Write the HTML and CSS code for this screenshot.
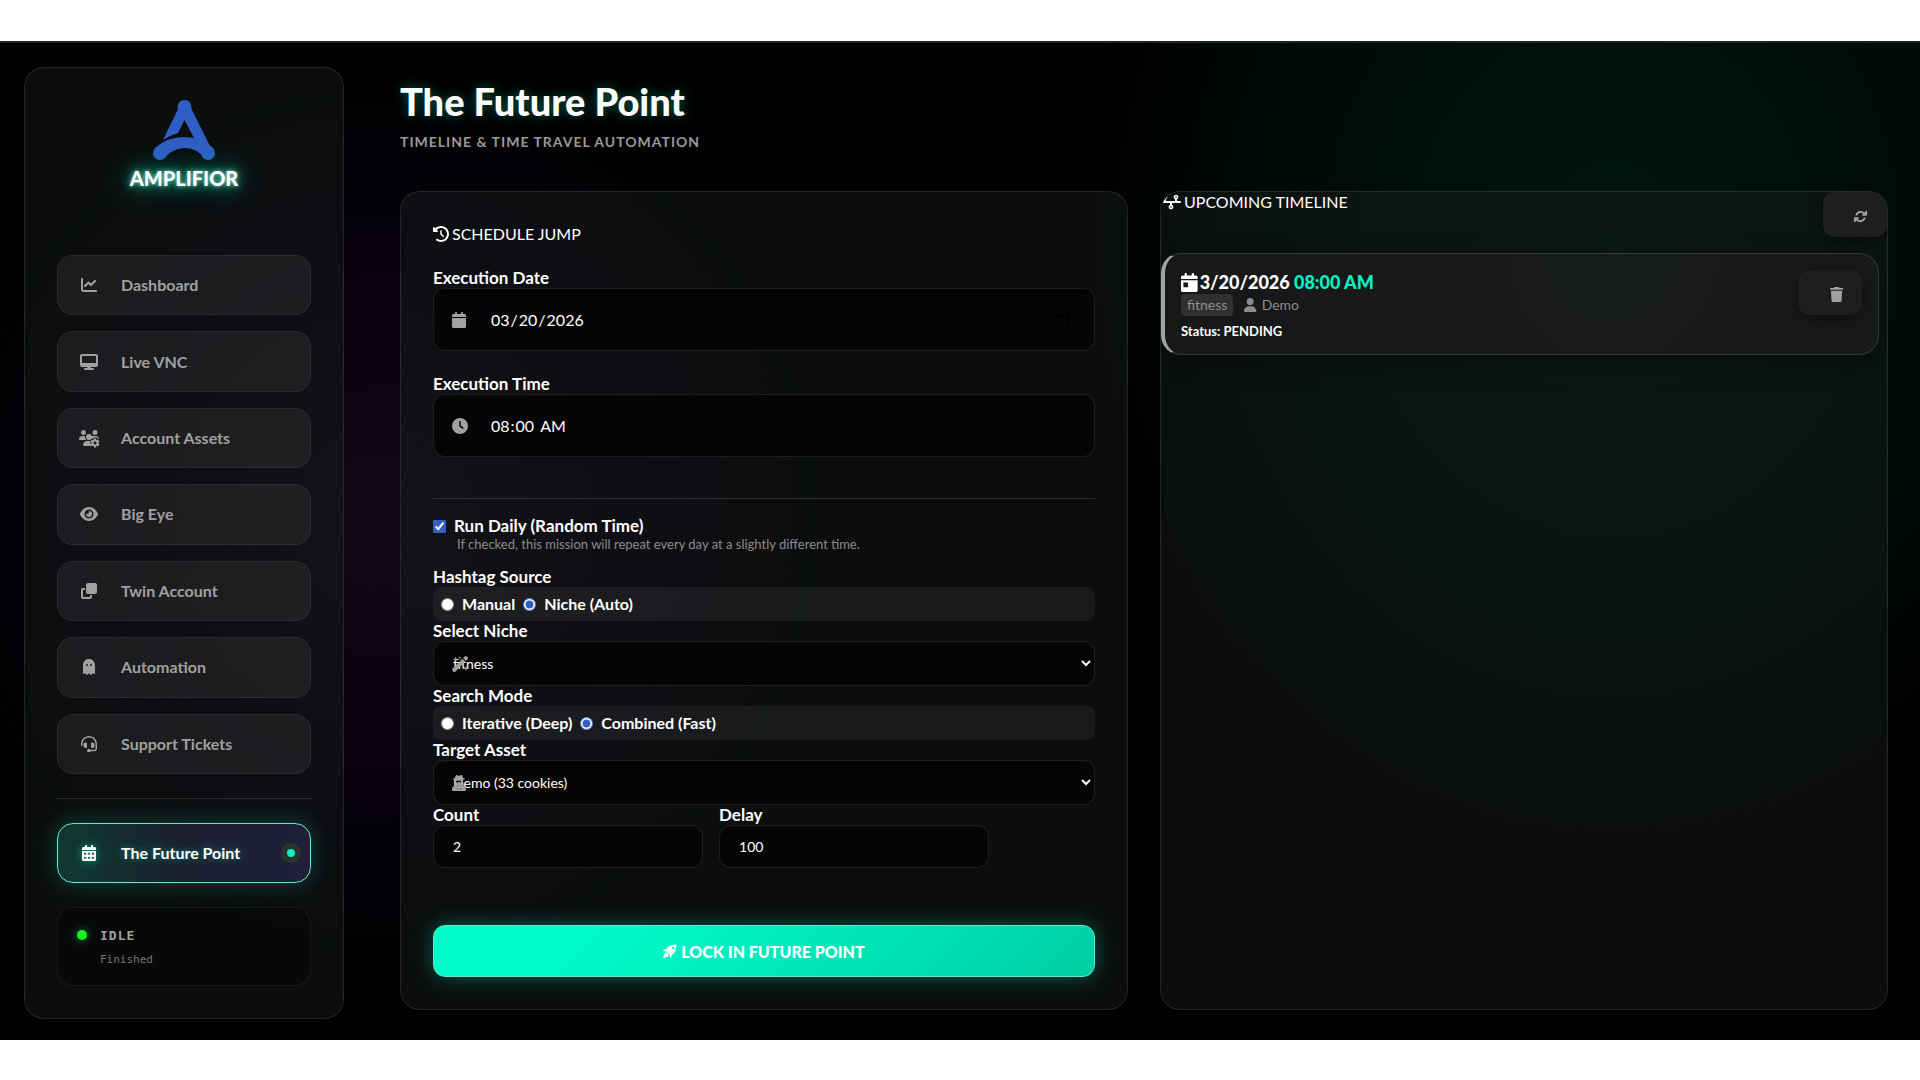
FILE: index.html
```html
<!DOCTYPE html>
<html lang="en">
<head>
<meta charset="utf-8">
<meta name="viewport" content="width=device-width, initial-scale=1">
<title>Amplifior – The Future Point</title>
<link rel="stylesheet" href="styles.css">
</head>
<body>
<div class="app">
  <aside class="sidebar">
    <div class="brand">
      <svg class="brand-mark" viewBox="0 0 62 60" aria-hidden="true">
        <g fill="#2f5fc4">
          <circle cx="31.500" cy="7" r="7"/><circle cx="7" cy="53" r="7"/><circle cx="55" cy="53" r="7"/>
          <path d="M25 9 38 8 57 46 50 56 45 50 41 38 31.500 20 25 33Q18 35 10 40Z"/>
          <path d="M2 48Q14 37 31 37T60 48L52 58Q42 47 31 48T12 57Z"/>
        </g>
      </svg>
      <span class="brand-name">AMPLIFIOR</span>
    </div>
    <nav class="nav" aria-label="Main">
      <a class="nav-item" href="#"><span class="nav-icon"><svg class="icon" viewBox="0 0 512 512"><path d="M64 64c0-17.700-14.300-32-32-32S0 46.300 0 64V400c0 44.200 35.800 80 80 80H480c17.700 0 32-14.300 32-32s-14.300-32-32-32H80c-8.800 0-16-7.200-16-16V64zm406.600 86.600c12.500-12.500 12.500-32.800 0-45.300s-32.800-12.500-45.300 0L320 210.700l-57.400-57.400c-12.500-12.500-32.800-12.500-45.300 0l-112 112c-12.500 12.500-12.500 32.800 0 45.300s32.800 12.500 45.300 0L240 221.300l57.400 57.400c12.500 12.500 32.800 12.500 45.300 0l128-128z"/></svg></span>Dashboard</a>
      <a class="nav-item" href="#"><span class="nav-icon"><svg class="icon" viewBox="0 0 576 512"><path d="M64 0C28.700 0 0 28.700 0 64V352c0 35.300 28.700 64 64 64H240l-10.700 32H160c-17.700 0-32 14.300-32 32s14.300 32 32 32H416c17.700 0 32-14.300 32-32s-14.300-32-32-32H346.700L336 416H512c35.300 0 64-28.700 64-64V64c0-35.300-28.700-64-64-64H64zM512 64V288H64V64H512z"/></svg></span>Live VNC</a>
      <a class="nav-item" href="#"><span class="nav-icon"><svg class="icon" viewBox="0 0 640 512"><circle cx="144" cy="80" r="80"/><circle cx="512" cy="80" r="80"/><circle cx="320" cy="220" r="96"/><path d="M0 299c0-59 48-107 107-107h42c16 0 31 3 45 10-8 40 3 84 38 118H21c-12 0-21-9-21-21zM406 202c14-7 29-10 44-10h83c59 0 107 48 107 107-12-12-24-18-40-22l-30-34h-84l-30 34-40 20c-14-20-14-70-10-95zM128 485c0-74 60-133 133-133h100c-8 40-4 80 38 110l-6 50H155c-15 0-27-12-27-27z"/><path fill-rule="evenodd" d="M478 270h68l8 42 28 16 40-14 34 59-32 27v32l32 27-34 59-40-14-28 16-8 42h-68l-8-42-28-16-40 14-34-59 32-27v-32l-32-27 34-59 40 14 28-16zM512 370a46 46 0 1 0 0 92 46 46 0 1 0 0-92z"/></svg></span>Account Assets</a>
      <a class="nav-item" href="#"><span class="nav-icon"><svg class="icon" viewBox="0 0 576 512"><path d="M288 32c-80.800 0-145.500 36.800-192.600 80.600C48.600 156 17.300 208 2.500 243.700c-3.300 7.900-3.300 16.700 0 24.600C17.300 304 48.600 356 95.400 399.400C142.500 443.200 207.200 480 288 480s145.500-36.800 192.600-80.600c46.800-43.500 78.100-95.400 93-131.100c3.300-7.900 3.300-16.700 0-24.600c-14.900-35.700-46.200-87.700-93-131.100C433.500 68.800 368.800 32 288 32zM144 256a144 144 0 1 1 288 0 144 144 0 1 1 -288 0zm144-64c0 35.300-28.700 64-64 64c-7.100 0-13.900-1.200-20.300-3.300c-5.500-1.800-11.900 1.600-11.700 7.400c.3 6.900 1.300 13.800 3.200 20.700c13.700 51.200 66.400 81.600 117.600 67.900s81.600-66.400 67.900-117.600c-11.100-41.500-47.800-69.400-88.600-71.100c-5.800-.2-9.200 6.100-7.400 11.700c2.100 6.400 3.300 13.200 3.300 20.300z"/></svg></span>Big Eye</a>
      <a class="nav-item" href="#"><span class="nav-icon"><svg class="icon" viewBox="0 0 512 512"><path d="M288 448H64V224h64V160H64c-35.300 0-64 28.700-64 64V448c0 35.300 28.700 64 64 64H288c35.300 0 64-28.700 64-64V384H288v64zm-64-96H448c35.300 0 64-28.700 64-64V64c0-35.300-28.700-64-64-64H224c-35.300 0-64 28.700-64 64V288c0 35.300 28.700 64 64 64z"/></svg></span>Twin Account</a>
      <a class="nav-item" href="#"><span class="nav-icon"><svg class="icon" viewBox="0 0 384 512"><path d="M40.100 467.100l-11.200 9c-3.200 2.500-7.100 3.900-11.100 3.900C8 480 0 472 0 462.200V192C0 86 86 0 192 0S384 86 384 192V462.200c0 9.800-8 17.800-17.800 17.800c-4 0-7.900-1.400-11.100-3.900l-11.200-9c-13.400-10.700-32.800-9-44.100 3.900L269.300 506c-3.300 3.800-8.200 6-13.300 6s-9.900-2.200-13.300-6l-26.600-30.500c-12.700-14.600-35.400-14.600-48.200 0L141.300 506c-3.300 3.800-8.200 6-13.300 6s-9.900-2.200-13.300-6L84.200 471c-11.300-12.900-30.700-14.600-44.100-3.900zM160 192a32 32 0 1 0 -64 0 32 32 0 1 0 64 0zm96 32a32 32 0 1 0 0-64 32 32 0 1 0 0 64z"/></svg></span>Automation</a>
      <a class="nav-item" href="#"><span class="nav-icon"><svg class="icon" viewBox="0 0 512 512"><path d="M256 48C141.100 48 48 141.100 48 256v40c0 13.300-10.700 24-24 24s-24-10.700-24-24V256C0 114.600 114.600 0 256 0S512 114.600 512 256V400.100c0 48.600-39.400 88-88.100 88L313.600 488c-8.300 14.300-23.800 24-41.600 24H240c-26.500 0-48-21.500-48-48s21.500-48 48-48h32c17.800 0 33.300 9.700 41.600 24l110.400 .1c22.100 0 40-17.900 40-40V256c0-114.900-93.100-208-208-208zM144 208h16c17.700 0 32 14.300 32 32V352c0 17.700-14.300 32-32 32H144c-35.300 0-64-28.700-64-64V272c0-35.300 28.700-64 64-64zm224 0c35.300 0 64 28.700 64 64v48c0 35.300-28.700 64-64 64H352c-17.700 0-32-14.300-32-32V240c0-17.700 14.300-32 32-32h16z"/></svg></span>Support Tickets</a>
    </nav>
    <div class="nav-extra">
      <a class="nav-item active" href="#" aria-current="page"><span class="nav-icon"><svg class="icon" viewBox="0 0 448 512"><path fill-rule="evenodd" d="M96 32V64H48C21.500 64 0 85.500 0 112v48H448V112c0-26.500-21.500-48-48-48H352V32c0-42-64-42-64 0V64H160V32c0-42-64-42-64 0zM448 192H0V464c0 26.500 21.500 48 48 48H400c26.500 0 48-21.500 48-48V192zM64 250h70v58H64zM189 250h70v58h-70zM314 250h70v58h-70zM64 380h70v58H64zM189 380h70v58h-70zM314 380h70v58h-70z"/></svg></span>The Future Point<span class="active-dot"></span></a>
    </div>
    <div class="status">
      <span class="status-dot"></span>
      <div>
        <div class="status-state">IDLE</div>
        <div class="status-detail">Finished</div>
      </div>
    </div>
  </aside>

  <main class="main">
    <header class="page-head">
      <h1>The Future Point</h1>
      <p>TIMELINE &amp; TIME TRAVEL AUTOMATION</p>
    </header>
    <div class="columns">
      <section class="card form-card">
        <h2 class="card-title"><svg class="icon" viewBox="0 0 512 512"><path d="M75 75L41 41C25.900 25.900 0 36.600 0 57.900V168c0 13.300 10.700 24 24 24H134.100c21.400 0 32.100-25.900 17-41l-30.800-30.800C155 85.500 203 64 256 64c106 0 192 86 192 192s-86 192-192 192c-40.800 0-78.600-12.700-109.700-34.400c-14.500-10.100-34.400-6.600-44.600 7.900s-6.600 34.400 7.900 44.600C151.200 495 201.700 512 256 512c141.400 0 256-114.600 256-256S397.400 0 256 0C185.300 0 121.300 28.700 75 75zm181 53c-13.300 0-24 10.700-24 24V256c0 6.400 2.500 12.500 7 17l72 72c9.400 9.400 24.600 9.400 33.900 0s9.400-24.600 0-33.900l-65-65V152c0-13.300-10.700-24-24-24z"/></svg>SCHEDULE JUMP</h2>
        <form class="form">
          <div class="group spaced">
            <label class="label" for="date">Execution Date</label>
            <div class="field">
              <svg class="icon field-icon" viewBox="0 0 448 512"><path d="M96 32V64H48C21.500 64 0 85.500 0 112v48H448V112c0-26.500-21.500-48-48-48H352V32c0-17.700-14.300-32-32-32s-32 14.300-32 32V64H160V32c0-17.700-14.300-32-32-32S96 14.300 96 32zM448 192H0V464c0 26.500 21.500 48 48 48H400c26.500 0 48-21.500 48-48V192z"/></svg>
              <input class="control tall" id="date" type="date" value="2026-03-20">
            </div>
          </div>
          <div class="group">
            <label class="label" for="time">Execution Time</label>
            <div class="field">
              <svg class="icon field-icon" viewBox="0 0 512 512"><path d="M256 0a256 256 0 1 1 0 512A256 256 0 1 1 256 0zM232 120V256c0 8 4 15.500 10.700 20l96 64c11 7.400 25.900 4.400 33.300-6.700s4.400-25.900-6.700-33.300L280 243.200V120c0-13.300-10.700-24-24-24s-24 10.700-24 24z"/></svg>
              <input class="control tall" id="time" type="time" value="08:00">
            </div>
          </div>
          <div class="daily">
            <label class="check"><input type="checkbox" checked>Run Daily (Random Time)</label>
            <p class="hint">If checked, this mission will repeat every day at a slightly different time.</p>
          </div>
          <fieldset class="group">
            <legend class="label">Hashtag Source</legend>
            <div class="radios">
              <label><input type="radio" name="source">Manual</label>
              <label><input type="radio" name="source" checked>Niche (Auto)</label>
            </div>
          </fieldset>
          <div class="group">
            <label class="label" for="niche">Select Niche</label>
            <div class="field">
              <svg class="icon field-icon" viewBox="0 0 576 512"><path d="M20 400 330 90l92 92-310 310c-22 22-56 22-78 0l-14-14c-22-22-22-56 0-78zM355 66l48-48c22-22 56-22 78 0l14 14c22 22 22 56 0 78l-48 48zM112 20l22 62 62 22-62 22-22 62-22-62-62-22 62-22zM250 0l14 40 40 14-40 14-14 40-14-40-40-14 40-14zM450 300l24 66 66 24-66 24-24 66-24-66-66-24 66-24z"/></svg>
              <select class="control" id="niche"><option>fitness</option></select>
            </div>
          </div>
          <fieldset class="group">
            <legend class="label">Search Mode</legend>
            <div class="radios">
              <label><input type="radio" name="mode">Iterative (Deep)</label>
              <label><input type="radio" name="mode" checked>Combined (Fast)</label>
            </div>
          </fieldset>
          <div class="group">
            <label class="label" for="asset">Target Asset</label>
            <div class="field">
              <svg class="icon field-icon" viewBox="0 0 448 512"><path fill-rule="evenodd" d="M150 0c26 0 46 24 74 24S272 0 298 0c30 0 48 60 56 96 36 7 62 16 62 32 0 14-20 24-64 34 2 60-8 90-28 116h72l-30 60c50 24 82 66 82 130 0 26-18 44-44 44H44c-26 0-44-18-44-44 0-64 32-106 82-130l-30-60h72c-20-26-30-56-28-116-44-10-64-20-64-34 0-16 26-25 62-32 8-36 26-96 56-96zM128 180v32c10 36 72 36 80 0h32c8 36 70 36 80 0v-32zM190 330l-26 150 44-84zM258 330l26 150-44-84z"/></svg>
              <select class="control" id="asset"><option>Demo (33 cookies)</option></select>
            </div>
          </div>
          <div class="numbers">
            <div class="group">
              <label class="label" for="count">Count</label>
              <input class="control short" id="count" type="number" value="2">
            </div>
            <div class="group">
              <label class="label" for="delay">Delay</label>
              <input class="control short" id="delay" type="number" value="100">
            </div>
          </div>
          <button class="submit" type="button"><svg class="icon" viewBox="0 0 512 512"><path fill-rule="evenodd" d="M492 18c8 240-100 340-180 388v62c0 16-8 28-22 36l-26 8-24-120-120-120L0 248l10-30c8-14 20-20 36-20h64C160 120 250 10 492 18zM370 96a44 44 0 1 0 0 88 44 44 0 1 0 0-88zM110 300l100 100c-30 80-120 110-200 110 0-60 20-180 100-210z"/></svg>LOCK IN FUTURE POINT</button>
        </form>
      </section>

      <section class="card timeline-card">
        <div class="timeline-head">
          <h2 class="card-title"><svg class="icon" viewBox="0 0 640 512"><path fill-rule="evenodd" d="M128 20a76 76 0 0 1 32 145v59h288v-59a76 76 0 1 1 64 0v59h96a32 32 0 0 1 0 64H352v59a76 76 0 1 1-64 0v-59H32a32 32 0 0 1 0-64h64v-59A76 76 0 0 1 128 20zM128 70a26 26 0 1 0 0 52 26 26 0 1 0 0-52zM480 70a26 26 0 1 0 0 52 26 26 0 1 0 0-52zM320 390a26 26 0 1 0 0 52 26 26 0 1 0 0-52z"/></svg>UPCOMING TIMELINE</h2>
          <button class="icon-button" type="button" aria-label="Refresh"><svg class="icon" viewBox="0 0 512 512"><path d="M142 218H78C98 118 172 64 256 64c54 0 100 20 136 54l54-54c12-12 34-4 34 14v132c0 10-8 18-18 18H330c-18 0-26-20-14-32l32-32c-58-52-164-46-206 54zM370 294h64c-20 100-94 154-178 154-54 0-100-20-136-54l-54 54c-12 12-34 4-34-14V302c0-10 8-18 18-18h132c18 0 26 20 14 32l-32 32c58 52 164 46 206-54z"/></svg></button>
        </div>
        <article class="job">
          <div>
            <div class="job-when"><svg class="icon" viewBox="0 0 448 512"><path fill-rule="evenodd" d="M96 32V64H48C21.500 64 0 85.500 0 112v48H448V112c0-26.500-21.500-48-48-48H352V32c0-42-64-42-64 0V64H160V32c0-42-64-42-64 0zM448 192H0V464c0 26.500 21.500 48 48 48H400c26.500 0 48-21.500 48-48V192zM80 256h96c9 0 16 7 16 16v96c0 9-7 16-16 16H80c-9 0-16-7-16-16v-96c0-9 7-16 16-16z"/></svg><span>3/20/2026 <time>08:00 AM</time></span></div>
            <div class="job-meta"><span class="tag">fitness</span><svg class="icon" viewBox="0 0 448 512"><path d="M224 256A128 128 0 1 0 224 0a128 128 0 1 0 0 256zm-45.700 48C79.800 304 0 383.800 0 482.300C0 498.700 13.300 512 29.700 512H418.300c16.400 0 29.700-13.300 29.700-29.700C448 383.800 368.200 304 269.700 304H178.300z"/></svg>Demo</div>
            <div class="job-status">Status: PENDING</div>
          </div>
          <button class="icon-button" type="button" aria-label="Delete"><svg class="icon" viewBox="0 0 448 512"><path d="M135.200 17.700L128 32H32C14.300 32 0 46.300 0 64S14.300 96 32 96H416c17.700 0 32-14.300 32-32s-14.300-32-32-32H320l-7.200-14.300C307.400 6.800 296.300 0 284.200 0H163.800c-12.100 0-23.200 6.800-28.600 17.700zM416 128H32L53.200 467c1.600 25.300 22.600 45 47.900 45H346.900c25.300 0 46.300-19.700 47.900-45L416 128z"/></svg></button>
        </article>
      </section>
    </div>
  </main>
</div>
</body>
</html>
```
FILE: styles.css
```css
:root {
  --accent: #00f5c4;
  --text: #ffffff;
  --muted: #a0a0a0;
  --line: rgba(255, 255, 255, 0.1);
  --panel: rgba(22, 28, 26, 0.5);
}

* { box-sizing: border-box; }

body {
  margin: 0;
  min-height: 100vh;
  padding: 41px 0 40px;
  display: flex;
  flex-direction: column;
  background: #fff;
  color: var(--text);
  font-family: Lato, "Liberation Sans", sans-serif;
  font-size: 16px;
  line-height: 20px;
}

h1, h2, p, fieldset, legend { margin: 0; padding: 0; border: 0; }
fieldset { min-width: 0; }
button, input, select { font-family: inherit; }

.icon { height: 16px; width: auto; flex: none; fill: currentColor; overflow: visible; }

.app {
  flex: 1;
  display: flex;
  gap: 56px;
  padding: 24px 32px 21px 24px;
  border-top: 2px solid #202322;
  background:
    radial-gradient(ellipse 24% 46% at 20% 48%, rgba(17, 9, 20, 1), rgba(8, 2, 14, 0.8) 60%, transparent),
    radial-gradient(ellipse 28% 62% at 84% 20%, rgba(0, 22, 16, 1), rgba(0, 14, 10, 0.8) 60%, transparent),
    #000;
}

/* Sidebar */
.sidebar {
  width: 320px;
  flex: none;
  display: flex;
  flex-direction: column;
  padding: 32px;
  border: 1px solid var(--line);
  border-radius: 20px;
  background: var(--panel);
}

.brand {
  display: flex;
  flex-direction: column;
  align-items: center;
  gap: 6px;
  height: 155px;
}

.brand-mark { width: 62px; height: 60px; }

.brand-name {
  font-size: 20px;
  line-height: 24px;
  font-weight: 900;
  text-shadow: 0 0 4px rgba(255, 255, 255, 0.6), 0 0 10px rgba(0, 245, 196, 0.7), 0 0 24px rgba(0, 245, 196, 0.9);
}

.nav { flex: 1; display: flex; flex-direction: column; gap: 16px; }

.nav-item {
  flex: 1;
  min-height: 60px;
  display: flex;
  align-items: center;
  gap: 18px;
  padding: 0 15px 0 17px;
  border: 1px solid rgba(255, 255, 255, 0.06);
  border-radius: 16px;
  background: rgba(255, 255, 255, 0.06);
  color: var(--muted);
  font-weight: 700;
  text-decoration: none;
}

.nav-icon { width: 28px; display: flex; justify-content: center; }

.nav-extra {
  margin: 24px 0;
  padding-top: 24px;
  border-top: 1px solid rgba(255, 255, 255, 0.12);
}

.nav-item.active {
  border-color: #6fe8d0;
  background: linear-gradient(90deg, #0e3a30, #1c2030 50%, #20203a);
  box-shadow: 0 0 22px rgba(0, 245, 196, 0.25);
  color: #fff;
  text-shadow: 0 0 8px rgba(0, 245, 196, 0.5);
}

.nav-item.active .icon { filter: drop-shadow(0 0 5px rgba(0, 245, 196, 0.6)); }

.active-dot {
  width: 8px;
  height: 8px;
  margin-left: auto;
  border-radius: 50%;
  background: var(--accent);
  box-shadow: 0 0 0 6px #29342f;
}

.status {
  display: flex;
  gap: 13px;
  padding: 19px 19px 16px;
  border: 1px solid rgba(255, 255, 255, 0.06);
  border-radius: 16px;
  background: rgba(0, 0, 0, 0.3);
  font-family: "DejaVu Sans Mono", monospace;
}

.status-dot {
  width: 10px;
  height: 10px;
  margin-top: 3px;
  border-radius: 50%;
  background: #1af51a;
  box-shadow: 0 0 8px rgba(0, 245, 140, 0.6);
}

.status-state { font-size: 13px; line-height: 18px; letter-spacing: 1px; font-weight: 700; color: var(--muted); }
.status-detail { margin-top: 6px; font-size: 11px; line-height: 18px; color: #777; }

/* Main area */
.main { flex: 1; min-width: 0; display: flex; flex-direction: column; }

.page-head { padding: 8px 0 39px; }
.page-head h1 {
  font-size: 38px;
  line-height: 52px;
  font-weight: 900;
  text-shadow: 0 0 12px rgba(0, 245, 196, 0.4);
}
.page-head p { margin-top: 5px; font-size: 14px; line-height: 20px; font-weight: 700; letter-spacing: 1px; color: #999; }

.columns {
  flex: 1;
  display: grid;
  grid-template-columns: repeat(2, minmax(0, 1fr));
  gap: 32px;
  margin-bottom: 9px;
}

.card {
  border: 1px solid var(--line);
  border-radius: 20px;
  background: var(--panel);
}

.card-title {
  display: flex;
  align-items: center;
  gap: 3px;
  font-size: 16px;
  line-height: 20px;
  font-weight: 400;
}

/* Form */
.form-card { display: flex; flex-direction: column; padding: 32px; }
.form { flex: 1; display: flex; flex-direction: column; margin-top: 25px; }
.label { display: block; height: 19px; font-size: 17px; line-height: 18px; font-weight: 700; }
.group.spaced { margin-bottom: 24px; }
.field { position: relative; }

.field-icon {
  position: absolute;
  left: 19px;
  top: 50%;
  transform: translateY(-50%);
  color: var(--muted);
}

.control {
  display: block;
  width: 100%;
  height: 45px;
  padding: 0 19px;
  border: 1px solid rgba(255, 255, 255, 0.1);
  border-radius: 12px;
  background: #050505;
  color: #fff;
  font-size: 14px;
}

select.control { margin-bottom: 1px; padding: 0 4px 0 15px; }
.control.tall { height: 63px; padding: 0 21px 0 56px; font-size: 16px; }
.control.short { height: 43px; appearance: textfield; }
.control.short::-webkit-inner-spin-button { display: none; }

.daily {
  margin: 41px 0 16px;
  padding-top: 17px;
  border-top: 1px solid rgba(255, 255, 255, 0.13);
}

.check { display: flex; align-items: center; gap: 8px; height: 20px; font-size: 17px; font-weight: 700; }
.check input, .radios input { width: 13px; height: 13px; margin: 0; accent-color: #2f5fc4; }
.hint { padding-left: 24px; font-size: 13px; line-height: 16px; color: #8c8c8c; }

.radios {
  height: 34px;
  display: flex;
  align-items: center;
  gap: 8px;
  margin-bottom: 1px;
  padding: 0 8px;
  border-radius: 8px;
  background: rgba(255, 255, 255, 0.055);
  font-size: 16px;
  line-height: 18px;
  font-weight: 700;
}

.radios label { display: flex; align-items: center; gap: 8px; }
.numbers { display: flex; gap: 16px; width: 84%; }
.numbers .group { flex: 1; }

.submit {
  display: flex;
  align-items: center;
  justify-content: center;
  gap: 4px;
  height: 52px;
  margin-top: auto;
  border: 1px solid #62e8cd;
  border-radius: 12px;
  background: linear-gradient(135deg, #00fccb 20%, #00cfa5);
  box-shadow: 0 0 20px rgba(0, 245, 196, 0.35);
  color: #fff;
  font-size: 16px;
  font-weight: 900;
}

.submit .icon { height: 14px; }

/* Timeline */
.timeline-card { overflow: hidden; }
.timeline-head { display: flex; align-items: flex-start; justify-content: space-between; height: 61px; }

.icon-button {
  width: 64px;
  height: 45px;
  display: flex;
  align-items: center;
  justify-content: flex-end;
  padding: 4px 19px 0 0;
  border: 0;
  border-radius: 12px;
  background: #1e1e20;
  box-shadow: 0 4px 12px rgba(0, 0, 0, 0.4);
  color: var(--muted);
}

.icon-button .icon { height: 15px; }

.job {
  display: flex;
  align-items: flex-start;
  justify-content: space-between;
  margin-right: 8px;
  height: 102px;
  padding: 16px;
  border: 1px solid rgba(255, 255, 255, 0.13);
  border-left: 4px solid #a3a3a3;
  border-radius: 20px;
  background: rgba(28, 27, 28, 0.75);
  box-shadow: 0 8px 24px rgba(0, 0, 0, 0.3);
}

.job-when { display: flex; align-items: center; gap: 2px; height: 24px; font-size: 18px; font-weight: 900; }
.job-when .icon { height: 19px; }
.job-when time { color: var(--accent); }
.job-meta { display: flex; align-items: center; gap: 5px; font-size: 14px; color: #8c8c8c; }
.job-meta .icon { height: 14px; }
.tag { margin-right: 6px; padding: 1px 6px; border-radius: 4px; background: #303033; }
.job-status { margin-top: 5px; font-size: 13px; line-height: 20px; font-weight: 700; }
```
